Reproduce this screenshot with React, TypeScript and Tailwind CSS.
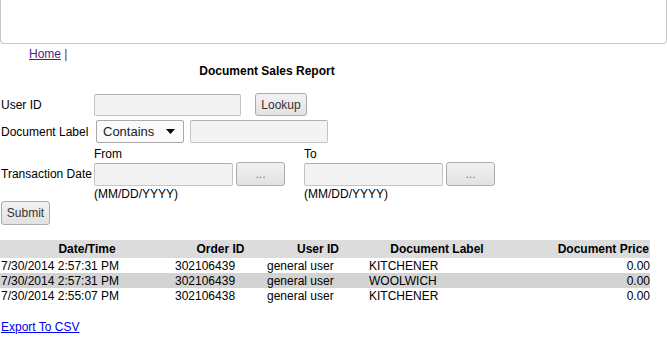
import React from "react";

const font = { fontFamily: '"Liberation Sans", Arial, sans-serif' };

function Btn({ children, w, h, cls = "" }: { children: React.ReactNode; w: string; h: string; cls?: string }) {
  return (
    <div
      className={`${w} ${h} ${cls} flex items-center justify-center rounded-[3px] border border-[#acacac] bg-gradient-to-b from-[#f2f2f2] to-[#e2e2e2] text-[12px] text-[#333]`}
    >
      {children}
    </div>
  );
}

function Input({ w, h }: { w: string; h: string }) {
  return <div className={`${w} ${h} rounded-[2px] border border-[#c4c4c4] border-t-[#b0b0b0] bg-[#f3f3f3]`} />;
}

const rows = [
  ["7/30/2014 2:57:31 PM", "302106439", "general user", "KITCHENER", "0.00"],
  ["7/30/2014 2:57:31 PM", "302106439", "general user", "WOOLWICH", "0.00"],
  ["7/30/2014 2:55:07 PM", "302106438", "general user", "KITCHENER", "0.00"],
];

export default function App() {
  return (
    <div className="w-[667px] h-[338px] bg-white text-[12px] leading-[14px] text-black overflow-hidden" style={font}>
      <div className="h-[44px] w-[667px] rounded-b-[4px] border-x border-b border-[#c8c8c8]" />
      <div className="pl-[29px] mt-[3px] h-[14px]">
        <span className="text-[#551a8b] underline">Home</span>
        <span className="text-[#551a8b]"> |</span>
      </div>
      <div className="w-[534px] text-center font-bold mt-[3px]">Document Sales Report</div>

      <div className="flex items-center h-[23px] mt-[15px]">
        <div className="w-[94px] pl-[1px]">User ID</div>
        <Input w="w-[147px]" h="h-[22px]" />
        <Btn w="w-[52px]" h="h-[23px]" cls="ml-[14px]">Lookup</Btn>
      </div>

      <div className="flex items-center h-[23px] mt-[4px]">
        <div className="w-[96px] pl-[1px]">Document Label</div>
        <div className="w-[88px] h-[23px] rounded-[2px] border border-[#a9a9a9] bg-[#fafafa] flex items-center justify-between pl-[6px] pr-[8px] text-[13px] text-[#222]">
          <span>Contains</span>
          <svg width="9" height="5" viewBox="0 0 9 5"><path d="M0 0h9L4.5 5z" fill="#000" /></svg>
        </div>
        <div className="ml-[6px]">
          <Input w="w-[138px]" h="h-[23px]" />
        </div>
      </div>

      <div className="flex h-[14px] mt-[4px]">
        <div className="w-[94px]" />
        <div className="w-[210px]">From</div>
        <div>To</div>
      </div>

      <div className="flex items-center h-[24px] mt-[1px]">
        <div className="w-[94px] pl-[1px] whitespace-nowrap">Transaction Date</div>
        <Input w="w-[139px]" h="h-[23px]" />
        <Btn w="w-[49px]" h="h-[24px]" cls="ml-[3px] text-[#777]">...</Btn>
        <div className="ml-[19px]">
          <Input w="w-[139px]" h="h-[23px]" />
        </div>
        <Btn w="w-[49px]" h="h-[24px]" cls="ml-[3px] text-[#777]">...</Btn>
      </div>

      <div className="flex h-[14px] mt-[1px]">
        <div className="w-[94px]" />
        <div className="w-[210px]">(MM/DD/YYYY)</div>
        <div>(MM/DD/YYYY)</div>
      </div>

      <div className="ml-[1px] mt-0">
        <Btn w="w-[49px]" h="h-[24px]">Submit</Btn>
      </div>

      <table className="mt-[15px] w-[650px] border-collapse text-[12px]">
        <thead>
          <tr className="bg-[#dcdcdc] h-[18px]">
            <th className="w-[174px] font-bold text-center p-0">Date/Time</th>
            <th className="w-[93px] font-bold text-center p-0">Order ID</th>
            <th className="w-[102px] font-bold text-center p-0">User ID</th>
            <th className="w-[136px] font-bold text-center p-0">Document Label</th>
            <th className="font-bold text-right p-0 pr-[1px]">Document Price</th>
          </tr>
        </thead>
        <tbody>
          {rows.map((r, i) => (
            <tr key={i} className={`h-[15px] ${i === 1 ? "bg-[#d3d3d3]" : ""}`}>
              <td className="p-0 pl-[1px] whitespace-nowrap">{r[0]}</td>
              <td className="p-0 pl-[1px]">{r[1]}</td>
              <td className="p-0">{r[2]}</td>
              <td className="p-0">{r[3]}</td>
              <td className="p-0 text-right">{r[4]}</td>
            </tr>
          ))}
        </tbody>
      </table>

      <div className="mt-[17px] pl-[1px]">
        <span className="text-[#0000ee] underline">Export To CSV</span>
      </div>
    </div>
  );
}
